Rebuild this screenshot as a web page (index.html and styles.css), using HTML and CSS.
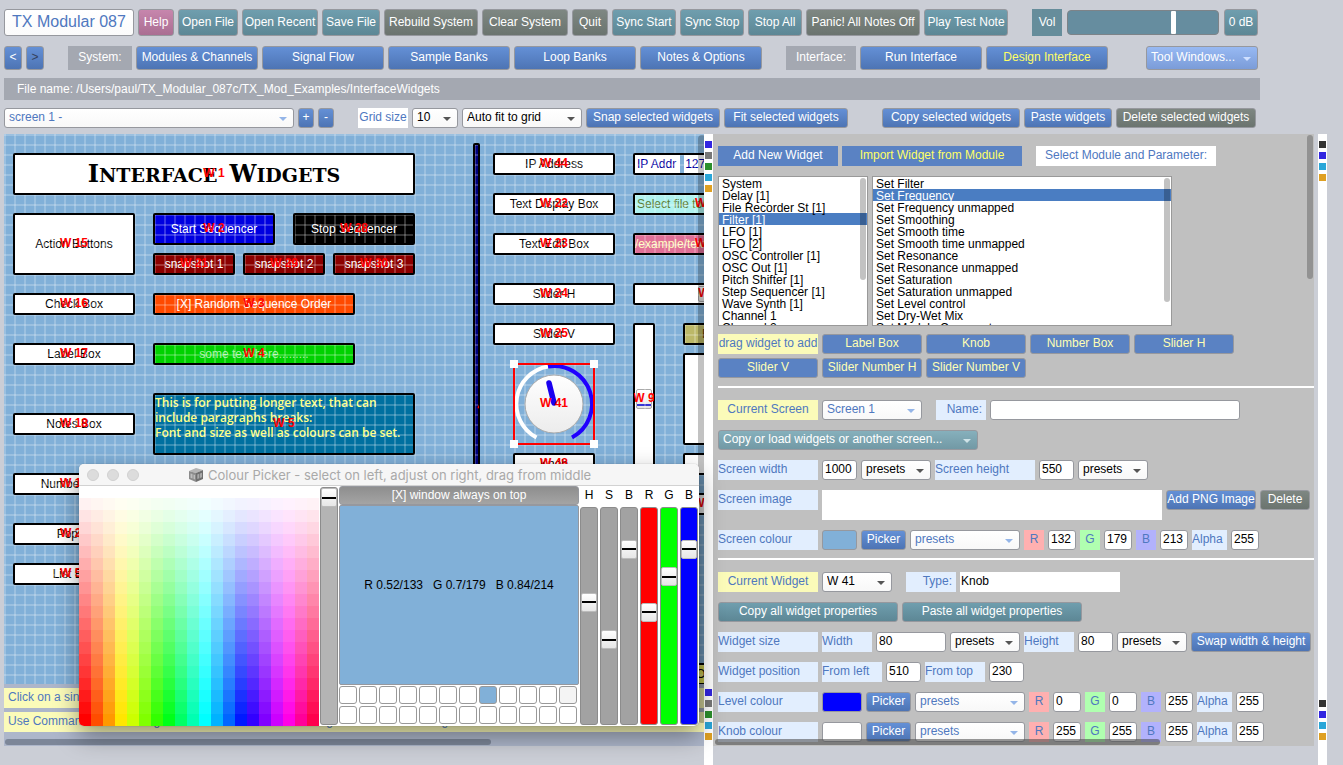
FILE: index.html
```html
<!DOCTYPE html>
<html lang="en">
<head>
<meta charset="utf-8">
<title>TX Modular 087</title>
<link rel="stylesheet" href="styles.css">
</head>
<body>
<header class="top">
  <div class="bar bar-main">
    <button class="btn brand w130">TX Modular 087</button>
    <button class="btn pink w36">Help</button>
    <button class="btn teal w60">Open File</button>
    <button class="btn teal w76">Open Recent</button>
    <button class="btn teal w58">Save File</button>
    <button class="btn grey w94">Rebuild System</button>
    <button class="btn grey w86">Clear System</button>
    <button class="btn grey w36">Quit</button>
    <button class="btn teal w64">Sync Start</button>
    <button class="btn teal w64">Sync Stop</button>
    <button class="btn teal w54">Stop All</button>
    <button class="btn grey w114">Panic! All Notes Off</button>
    <button class="btn teal w84">Play Test Note</button>
    <label class="tag teal-tag w30 push20" for="vol">Vol</label>
    <input class="volume" id="vol" type="range" min="0" max="100" value="71">
    <button class="btn teal w34">0 dB</button>
  </div>
  <nav class="bar bar-nav">
    <button class="btn blue w18" aria-label="Back">&lt;</button>
    <button class="btn blue dim w18" aria-label="Forward">&gt;</button>
    <span class="tag grey-tag w64 push20">System:</span>
    <button class="btn blue w122">Modules &amp; Channels</button>
    <button class="btn blue w122">Signal Flow</button>
    <button class="btn blue w122">Sample Banks</button>
    <button class="btn blue w122">Loop Banks</button>
    <button class="btn blue w122">Notes &amp; Options</button>
    <span class="tag grey-tag w70 push20">Interface:</span>
    <button class="btn blue w122">Run Interface</button>
    <button class="btn blue active w122">Design Interface</button>
    <select class="pop sky w112 push34" aria-label="Tool windows"><option>Tool Windows...</option></select>
  </nav>
  <div class="filename">File name: /Users/paul/TX_Modular_087c/TX_Mod_Examples/InterfaceWidgets</div>
  <div class="bar">
    <select class="pop soft w290" aria-label="Screen"><option>screen 1 -</option></select>
    <button class="btn blue w16" aria-label="Next screen">+</button>
    <button class="btn blue w16" aria-label="Previous screen">-</button>
    <label class="tag white-tag w50 push20" for="grid">Grid size</label>
    <select class="pop w46" id="grid"><option>10</option></select>
    <select class="pop w120" aria-label="Grid fitting"><option>Auto fit to grid</option></select>
    <button class="btn blue w134">Snap selected widgets</button>
    <button class="btn blue w124">Fit selected widgets</button>
    <button class="btn blue w138 push30">Copy selected widgets</button>
    <button class="btn blue w88">Paste widgets</button>
    <button class="btn grey w140">Delete selected widgets</button>
  </div>
</header>

<main class="work">
  <section class="design">
    <div class="canvas" id="canvas"></div>
    <p class="hint">Click on a single widget to select it, or drag it to move it around the screen.</p>
    <p class="hint">Use Command-click on widgets to select more than one widget at a time for editing.</p>
    <span class="thumb thumb-canvas-v"></span>
    <span class="thumb thumb-canvas-h"></span>
  </section>

  <div class="dock">
    <div class="marks"><i class="m-blue"></i><i class="m-grey"></i><i class="m-green"></i><i class="m-cyan"></i><i class="m-gold"></i></div>
    <div class="marks"><i class="m-blue"></i><i class="m-grey"></i><i class="m-green"></i><i class="m-cyan"></i><i class="m-gold"></i></div>
  </div>

  <section class="props">
    <div class="row">
      <button class="flat w120">Add New Widget</button>
      <button class="flat active w180">Import Widget from Module</button>
      <span class="tag white-tag w180 push10">Select Module and Parameter:</span>
    </div>
    <div class="row lists">
      <div class="listwrap w150">
        <select class="list" size="12" aria-label="Module">
          <option>System</option><option>Delay [1]</option><option>File Recorder St [1]</option><option selected>Filter [1]</option><option>LFO [1]</option><option>LFO [2]</option><option>OSC Controller [1]</option><option>OSC Out [1]</option><option>Pitch Shifter [1]</option><option>Step Sequencer [1]</option><option>Wave Synth [1]</option><option>Channel 1</option><option>Channel 2</option>
        </select>
        <span class="thumb thumb-list short"></span>
      </div>
      <div class="listwrap w300">
        <select class="list" size="12" aria-label="Parameter">
          <option>Set Filter</option><option selected>Set Frequency</option><option>Set Frequency unmapped</option><option>Set Smoothing</option><option>Set Smooth time</option><option>Set Smooth time unmapped</option><option>Set Resonance</option><option>Set Resonance unmapped</option><option>Set Saturation</option><option>Set Saturation unmapped</option><option>Set Level control</option><option>Set Dry-Wet Mix</option><option>Set Module Comments</option>
        </select>
        <span class="thumb thumb-list"></span>
      </div>
    </div>
    <div class="row tight">
      <span class="tag yellow-tag w100">drag widget to add</span>
      <button class="btn drag w100">Label Box</button>
      <button class="btn drag w100">Knob</button>
      <button class="btn drag w100">Number Box</button>
      <button class="btn drag w100">Slider H</button>
    </div>
    <div class="row">
      <button class="btn drag w100">Slider V</button>
      <button class="btn drag w100">Slider Number H</button>
      <button class="btn drag w100">Slider Number V</button>
    </div>
    <hr>
    <div class="row">
      <label class="tag yellow-tag w100" for="cur-screen">Current Screen</label>
      <select class="pop soft w100" id="cur-screen"><option>Screen 1</option></select>
      <label class="tag ice-tag right w50 push10" for="name">Name:</label>
      <input class="field w250" id="name" type="text">
    </div>
    <div class="row">
      <select class="pop tealpop w260" aria-label="Copy or load"><option>Copy or load widgets or another screen...</option></select>
    </div>
    <div class="row">
      <label class="tag ice-tag left w100" for="sw">Screen width</label>
      <input class="field w35" id="sw" type="text" value="1000">
      <select class="pop w70" aria-label="Width presets"><option>presets</option></select>
      <label class="tag ice-tag left w100" for="sh">Screen height</label>
      <input class="field w35" id="sh" type="text" value="550">
      <select class="pop w70" aria-label="Height presets"><option>presets</option></select>
    </div>
    <div class="row">
      <label class="tag ice-tag left w100" for="img">Screen image</label>
      <textarea class="image w340" id="img"></textarea>
      <button class="btn blue w90">Add PNG Image</button>
      <button class="btn grey w50">Delete</button>
    </div>
    <div class="row">
      <span class="tag ice-tag left w100">Screen colour</span>
      <span class="swatch sky-swatch w35"></span>
      <button class="btn blue w45">Picker</button>
      <select class="pop soft w110" aria-label="Screen colour presets"><option>presets</option></select>
      <label class="tag red-tag w20" for="sr">R</label><input class="field w28" id="sr" type="text" value="132">
      <label class="tag green-tag w20" for="sg">G</label><input class="field w28" id="sg" type="text" value="179">
      <label class="tag blue-tag w20" for="sb">B</label><input class="field w28" id="sb" type="text" value="213">
      <label class="tag ice-tag left w35" for="sa">Alpha</label><input class="field w28" id="sa" type="text" value="255">
    </div>
    <hr>
    <div class="row">
      <label class="tag yellow-tag w100" for="cur-widget">Current Widget</label>
      <select class="pop w70" id="cur-widget"><option>W 41</option></select>
      <label class="tag ice-tag right w50 push10" for="type">Type:</label>
      <input class="plain w160" id="type" type="text" value="Knob">
    </div>
    <div class="row">
      <button class="btn teal w180">Copy all widget properties</button>
      <button class="btn teal w180">Paste all widget properties</button>
    </div>
    <div class="row">
      <span class="tag ice-tag left w100">Widget size</span>
      <label class="tag ice-tag left w50" for="ww">Width</label>
      <input class="field w70" id="ww" type="text" value="80">
      <select class="pop w70" aria-label="Widget width presets"><option>presets</option></select>
      <label class="tag ice-tag left w50" for="wh">Height</label>
      <input class="field w35" id="wh" type="text" value="80">
      <select class="pop w70" aria-label="Widget height presets"><option>presets</option></select>
      <button class="btn blue w120">Swap width &amp; height</button>
    </div>
    <div class="row">
      <span class="tag ice-tag left w100">Widget position</span>
      <label class="tag ice-tag left w60" for="wl">From left</label>
      <input class="field w35" id="wl" type="text" value="510">
      <label class="tag ice-tag left w60" for="wt">From top</label>
      <input class="field w35" id="wt" type="text" value="230">
    </div>
    <div class="row">
      <span class="tag ice-tag left w100">Level colour</span>
      <span class="swatch blue-swatch w40"></span>
      <button class="btn blue w45">Picker</button>
      <select class="pop soft w110" aria-label="Level colour presets"><option>presets</option></select>
      <label class="tag red-tag w20" for="lr">R</label><input class="field w28" id="lr" type="text" value="0">
      <label class="tag green-tag w20" for="lg">G</label><input class="field w28" id="lg" type="text" value="0">
      <label class="tag blue-tag w20" for="lb">B</label><input class="field w28" id="lb" type="text" value="255">
      <label class="tag ice-tag left w35" for="la">Alpha</label><input class="field w28" id="la" type="text" value="255">
    </div>
    <div class="row last">
      <span class="tag ice-tag left w100">Knob colour</span>
      <span class="swatch white-swatch w40"></span>
      <button class="btn blue w45">Picker</button>
      <select class="pop soft w110" aria-label="Knob colour presets"><option>presets</option></select>
      <label class="tag red-tag w20" for="kr">R</label><input class="field w28" id="kr" type="text" value="255">
      <label class="tag green-tag w20" for="kg">G</label><input class="field w28" id="kg" type="text" value="255">
      <label class="tag blue-tag w20" for="kb">B</label><input class="field w28" id="kb" type="text" value="255">
      <label class="tag ice-tag left w35" for="ka">Alpha</label><input class="field w28" id="ka" type="text" value="255">
    </div>
    <span class="thumb thumb-props-v"></span>
    <span class="thumb thumb-props-h"></span>
  </section>

  <div class="dock dock-right">
    <div class="marks"><i class="m-black"></i><i class="m-blue"></i><i class="m-cyan"></i><i class="m-gold"></i></div>
    <div class="marks"><i class="m-black"></i><i class="m-blue"></i><i class="m-cyan"></i><i class="m-gold"></i></div>
  </div>
</main>

<aside class="picker">
  <div class="titlebar">
    <span class="light"></span><span class="light"></span><span class="light"></span>
    <h2 class="picker-title">
      <svg width="16" height="16" viewBox="0 0 16 16" aria-hidden="true">
        <path d="M1 4 8 1l7 2-7 3z" fill="#b5b5b5"/>
        <path d="M1 4l7 2v9l-7-3z" fill="#8b8b8b"/>
        <path d="M8 6l7-3v9l-7 3z" fill="#6f6f6f"/>
        <path d="M2.500 6.500l2 .6v4.400l-2-.7zM5.500 7.500l1.500.4v4.500l-1.500-.6z" fill="#bdbdbd"/>
        <path d="M9.300 7.600l2-.8v4.500l-2 .8zM12 6.500l2-.8v4.600l-2 .8z" fill="#a9a9a9"/>
      </svg>
      Colour Picker - select on left, adjust on right, drag from middle
    </h2>
  </div>
  <div class="picker-body">
    <div class="spectrum" id="spectrum"></div>
    <input class="vslider fade" type="range" min="0" max="100" value="100" aria-label="Brightness">
    <div class="mix">
      <button class="btn always">[X] window always on top</button>
      <output class="readout">R 0.52/133 &nbsp; G 0.7/179 &nbsp; B 0.84/214</output>
      <div class="wells" id="wells"></div>
    </div>
    <div class="channel"><label for="ch-h">H</label><input class="vslider" id="ch-h" type="range" max="1000" value="570"></div>
    <div class="channel"><label for="ch-s">S</label><input class="vslider" id="ch-s" type="range" max="1000" value="379"></div>
    <div class="channel"><label for="ch-v">B</label><input class="vslider" id="ch-v" type="range" max="1000" value="838"></div>
    <div class="channel"><label for="ch-r">R</label><input class="vslider red" id="ch-r" type="range" max="1000" value="520"></div>
    <div class="channel"><label for="ch-g">G</label><input class="vslider green" id="ch-g" type="range" max="1000" value="700"></div>
    <div class="channel"><label for="ch-b">B</label><input class="vslider azure" id="ch-b" type="range" max="1000" value="838"></div>
  </div>
</aside>
<script src="script.js"></script>
</body>
</html>
```
FILE: styles.css
```css
* { box-sizing: border-box; }

body {
  margin: 0;
  min-height: 100vh;
  display: flex;
  flex-direction: column;
  background: #cbced6;
  color: #000;
  font: 12px/16px "Liberation Sans", Arial, sans-serif;
  overflow: hidden;
}

button, input, select, textarea { font: inherit; margin: 0; }

/* top bars */
.top { padding: 9px 4px 0; display: flex; flex-direction: column; }
.bar { display: flex; gap: 4px; height: 20px; }
.bar-main { height: 27px; margin-bottom: 10px; }
.bar-nav { height: 24px; }
.filename {
  width: 1256px;
  max-width: 100%;
  height: 22px;
  margin: 8px 0;
  padding: 3px 13px;
  background: #a4a8b1;
  color: #fff;
}

.btn {
  flex: none;
  padding: 0 0 2px;
  border: 1px solid #96989e;
  border-radius: 3px;
  color: #fff;
  white-space: nowrap;
  text-align: center;
  line-height: 14px;
  overflow: hidden;
}
.blue { background: linear-gradient(#6490d6, #4d74b4); }
.teal { background: linear-gradient(#6f9eae, #5d8795); }
.grey { background: linear-gradient(#7e8782, #6b746f); }
.pink { background: linear-gradient(#c786ad, #aa6e92); }
.brand { background: linear-gradient(#fff, #fbfbfb); color: #4f78bf; font-size: 16px; }
.drag { background: #5a82c3; color: #ffffb4; }
.active { color: #ffff66; }
.dim { color: #34415c; }

.tag {
  flex: none;
  height: 100%;
  display: flex;
  align-items: center;
  justify-content: center;
  padding-bottom: 2px;
  color: #4f78bf;
  white-space: nowrap;
}
.left { justify-content: flex-start; }
.right { justify-content: flex-end; padding-right: 4px; }
.teal-tag { background: #668d9b; color: #fff; }
.grey-tag { background: #a4a8b1; color: #fff; }
.white-tag { background: #fff; }
.yellow-tag { background: #fbfbb9; }
.ice-tag { background: #e2eefe; }
.red-tag { background: #ffb0b0; }
.green-tag { background: #b0ffb0; }
.blue-tag { background: #b2b2fc; }

.pop {
  flex: none;
  appearance: none;
  padding: 0 16px 2px 4px;
  border: 1px solid #96989e;
  border-radius: 3px;
  color: #000;
  background: url("data:image/svg+xml,%3Csvg xmlns='http://www.w3.org/2000/svg' width='8' height='5'%3E%3Cpath d='M0 0h8L4 4z' fill='%23555'/%3E%3C/svg%3E") no-repeat right 6px top 60%, linear-gradient(#fff, #f8f8f8);
}
.soft {
  color: #4f78bf;
  background: url("data:image/svg+xml,%3Csvg xmlns='http://www.w3.org/2000/svg' width='8' height='5'%3E%3Cpath d='M0 0h8L4 4z' fill='%2394b5e8'/%3E%3C/svg%3E") no-repeat right 6px top 60%, linear-gradient(#fff, #f8f8f8);
}
.sky {
  color: #fff;
  background: url("data:image/svg+xml,%3Csvg xmlns='http://www.w3.org/2000/svg' width='8' height='5'%3E%3Cpath d='M0 0h8L4 4z' fill='%23cfe0ff'/%3E%3C/svg%3E") no-repeat right 6px top 60%, linear-gradient(#97b9f3, #7b9cd8);
}
.tealpop {
  color: #fff;
  background: url("data:image/svg+xml,%3Csvg xmlns='http://www.w3.org/2000/svg' width='8' height='5'%3E%3Cpath d='M0 0h8L4 4z' fill='%23cfe3e8'/%3E%3C/svg%3E") no-repeat right 6px top 60%, linear-gradient(#86b0bc, #7299a5);
}

.volume {
  appearance: none;
  flex: none;
  width: 152px;
  height: 25px;
  margin: 1px 1px;
  border: 1px solid #7d8388;
  border-radius: 4px;
  background: #668d9f;
}
.volume::-webkit-slider-thumb {
  appearance: none;
  width: 5px;
  height: 23px;
  border-radius: 1px;
  background: #fff;
}

/* work area */
.work {
  flex: 1;
  display: grid;
  grid-template-columns: minmax(0, 700fr) 9px minmax(0, 605fr) 9px;
  align-items: start;
  margin-top: 6px;
  padding: 0 16px 0 4px;
}
.design {
  position: relative;
  overflow: hidden;
  padding-bottom: 14px;
  background: #adb6ca;
}
.canvas {
  --lines:
    repeating-linear-gradient(90deg, rgba(255,255,255,.21) 0 2px, transparent 2px 10px),
    repeating-linear-gradient(rgba(255,255,255,.21) 0 2px, transparent 2px 10px);
  position: relative;
  height: 550px;
  margin-bottom: 4px;
  background: var(--lines), #81b0d8;
  overflow: hidden;
}
.widget {
  position: absolute;
  display: flex;
  align-items: center;
  justify-content: center;
  border: 2px solid #000;
  border-radius: 2px;
  background: #fff;
  white-space: nowrap;
  overflow: hidden;
}
/* the grid shows through widgets, lined up with the canvas grid */
.widget::after {
  content: "";
  position: absolute;
  inset: -1px 0 0 -1px;
  background: var(--lines);
}
.widget.start { background: #0000e0; color: #fff; }
.widget.stop { background: #000; color: #fff; }
.widget.snap { background: #8c0000; color: #fff; }
.widget.check { background: #ff4a00; color: #fff; }
.widget.label { background: #00d200; color: #a9f0a9; }
.widget.rule { background: #00007d; }
.widget.notes {
  display: block;
  background: #0070a0;
  color: #ffff80;
  font: 600 12px/15px "Open Sans", "Noto Sans", sans-serif;
  white-space: pre-line;
}
.widget.address { justify-content: flex-start; color: #0000a0; padding-left: 2px; }
.widget.address .ip { margin-left: 4px; border-left: 4px solid #81b0d8; padding-left: 1px; line-height: 18px; }
.widget.display { justify-content: flex-start; padding-left: 2px; background: #b0f2ef; color: #5c7c34; }
.widget.edit { justify-content: flex-start; background: #e07097; color: #ffffc0; }
.widget.olive { justify-content: flex-start; padding-left: 17px; background: #bcb868; color: #5a3a00; }
.widget.lemon { background: #f0ee60; }
.widget.title { font-family: "DejaVu Serif", serif; font-weight: bold; font-size: 19px; gap: 12px; text-transform: uppercase; }
.widget.title::after { content: none; }
.word { display: block; }
.word::first-letter { font-size: 24px; }
.wid {
  position: absolute;
  display: flex;
  align-items: center;
  justify-content: center;
  padding-bottom: 2px;
  color: #f00;
  font-weight: bold;
  white-space: nowrap;
  overflow: hidden;
}
.cap-h, .cap-v {
  position: absolute;
  border: 1px solid #aaa;
  border-radius: 2px;
  background: linear-gradient(#fff, #e4e4e4);
}
.cap-h { left: 63px; top: 1px; width: 18px; height: 16px; }
.cap-v { left: 1px; top: 64px; width: 16px; height: 20px; }
.cap-v::after { content: ""; display: block; margin: 14px 0 0; height: 2px; background: #0000c8; }
.knob { position: absolute; overflow: visible; }

.hint {
  height: 20px;
  margin: 0 0 4px;
  padding: 1px 4px;
  background: #fbfbb9;
  color: #4f78bf;
  white-space: nowrap;
  overflow: hidden;
}
.hint + .hint { margin-bottom: 0; }

.thumb { position: absolute; border-radius: 4px; background: rgba(0,0,0,.24); }
.thumb-canvas-v { right: -2px; top: 1px; width: 8px; height: 588px; }
.thumb-canvas-h { left: 1px; bottom: 1px; width: 486px; height: 6px; background: #7c8698; }
.thumb-props-v { right: 1px; top: 1px; width: 6px; height: 144px; }
.thumb-props-h { left: 2px; bottom: 1px; width: 445px; height: 6px; background: rgba(70,70,70,.55); }
.thumb-list { right: 2px; top: 2px; width: 6px; height: 124px; }
.thumb-list.short { height: 102px; }

.dock {
  align-self: stretch;
  display: flex;
  flex-direction: column;
  justify-content: space-between;
  padding: 7px 1px 25px;
  background: #fff;
}
.marks { display: flex; flex-direction: column; gap: 4px; }
.marks i { width: 7px; height: 7px; }
.m-blue { background: #3226e0; }
.m-grey { background: #777; }
.m-green { background: #2b8f2b; }
.m-cyan { background: #2aa6d8; }
.m-gold { background: #dfa022; }
.m-black { background: #333; }

/* property panel */
.props {
  position: relative;
  margin-right: 4px;
  padding: 12px 0 4px 5px;
  background: #c0c0c0;
  overflow: hidden;
}
.row { display: flex; gap: 4px; height: 20px; margin-bottom: 10px; }
.row.lists { height: 150px; margin-bottom: 8px; }
.row.tight { margin-bottom: 4px; }
.row.last { margin-bottom: 0; }
.row:has(+ hr) { margin-bottom: 8px; }
.row:has(.image) { height: 30px; margin-bottom: 10px; }
.row:has(.image) > .tag, .row:has(.image) > .btn { height: 20px; }
hr { height: 2px; margin: 0 0 12px; border: 0; background: #fff; }

.flat { flex: none; padding: 0 0 2px; border: 0; background: #5a82c3; color: #fff; white-space: nowrap; }
.flat.active { color: #ffff66; }

.listwrap { position: relative; flex: none; }
.list {
  width: 100%;
  height: 100%;
  padding: 0;
  border: 1px solid #999;
  border-radius: 0;
  background: #fff;
  color: #000;
  overflow: hidden;
  scrollbar-width: none;
  outline: none;
}
.list option { padding: 0 3px; min-height: 12px; height: 12px; line-height: 10px; overflow: visible; }
.list option:checked { background: #4a7dc2 linear-gradient(#4a7dc2, #4a7dc2); color: #fff; }

.field {
  flex: none;
  padding: 0 2px 2px;
  border: 1px solid #96989e;
  border-radius: 3px;
  background: #fff;
  color: #000;
}
.plain { flex: none; border: 0; padding: 0 1px 2px; background: #fff; color: #000; }
.image { flex: none; height: 30px; border: 0; resize: none; background: #fff; }
.swatch { flex: none; border: 1px solid #96989e; border-radius: 3px; }
.sky-swatch { background: #81b0d8; }
.blue-swatch { background: #00f; }
.white-swatch { background: #fff; }

/* floating colour picker window */
.picker {
  position: absolute;
  left: 79px;
  top: 464px;
  width: 620px;
  height: 262px;
  background: #fff;
  border-radius: 5px;
  overflow: hidden;
  box-shadow: 0 0 1px rgba(0,0,0,.4), 0 10px 25px rgba(0,0,0,.4);
}
.titlebar {
  height: 22px;
  display: flex;
  align-items: center;
  gap: 8px;
  padding: 0 8px;
  background: #f6f6f6;
  border-bottom: 1px solid #d2d2d2;
}
.light { width: 12px; height: 12px; border-radius: 50%; background: #dcdcdc; border: 1px solid #d0d0d0; }
.picker-title {
  flex: 1;
  display: flex;
  align-items: center;
  gap: 4px;
  margin: 0 0 0 41px;
  color: #a9a9a9;
  font: 13px/20px Inter, "Liberation Sans", sans-serif;
  white-space: nowrap;
}
.picker-body { display: flex; height: 240px; }
.spectrum { width: 240px; display: grid; grid-template-columns: repeat(20, 1fr); grid-template-rows: repeat(20, 1fr); }
.vslider {
  appearance: none;
  writing-mode: vertical-lr;
  direction: rtl;
  width: 18px;
  height: 218px;
  margin: 0 1px;
  border: 1px solid #8c8c8c;
  border-radius: 3px;
  background: #a2a2a2;
}
.vslider::-webkit-slider-thumb {
  appearance: none;
  width: 16px;
  height: 19px;
  border: 1px solid #bbb;
  border-radius: 2px;
  background: linear-gradient(#000, #000) no-repeat center / 14px 2px, linear-gradient(#fff, #e6e6e6);
}
.vslider.fade { height: 238px; margin: 1px; background: #b4b4b4; }
.vslider.red { background: #f00; }
.vslider.green { background: #0f0; }
.vslider.azure { background: #00f; }
.mix { width: 240px; display: flex; flex-direction: column; }
.always { height: 19px; background: linear-gradient(#8e8e8e, #a4a4a4); }
.readout {
  height: 180px;
  display: flex;
  align-items: center;
  justify-content: center;
  border: 1px solid #96989e;
  border-radius: 2px;
  background: #81b0d8;
  padding-bottom: 20px;
}
.wells { flex: 1; display: grid; grid-template-columns: repeat(12, 18px); grid-auto-rows: 18px; gap: 2px; padding-top: 1px; }
.well { padding: 0; border: 1px solid #999; border-radius: 3px; background: #fff; }
.well.used { background: #81b0d8; }
.well.pale { background: #f4f4f4; }
.channel { width: 20px; display: flex; flex-direction: column; text-align: center; }
.channel label { height: 21px; line-height: 19px; }

/* spacing and width scale */
.push10 { margin-left: 10px; }
.push20 { margin-left: 20px; }
.push30 { margin-left: 30px; }
.push34 { margin-left: 34px; }
.w16 { width: 16px; }
.w18 { width: 18px; }
.w20 { width: 20px; }
.w28 { width: 28px; }
.w30 { width: 30px; }
.w34 { width: 34px; }
.w35 { width: 35px; }
.w36 { width: 36px; }
.w40 { width: 40px; }
.w45 { width: 45px; }
.w46 { width: 46px; }
.w50 { width: 50px; }
.w54 { width: 54px; }
.w58 { width: 58px; }
.w60 { width: 60px; }
.w64 { width: 64px; }
.w70 { width: 70px; }
.w76 { width: 76px; }
.w84 { width: 84px; }
.w86 { width: 86px; }
.w88 { width: 88px; }
.w90 { width: 90px; }
.w94 { width: 94px; }
.w100 { width: 100px; }
.w110 { width: 110px; }
.w112 { width: 112px; }
.w114 { width: 114px; }
.w120 { width: 120px; }
.w122 { width: 122px; }
.w124 { width: 124px; }
.w130 { width: 130px; }
.w134 { width: 134px; }
.w138 { width: 138px; }
.w140 { width: 140px; }
.w150 { width: 150px; }
.w160 { width: 160px; }
.w180 { width: 180px; }
.w250 { width: 250px; }
.w260 { width: 260px; }
.w290 { width: 290px; }
.w300 { width: 300px; }
.w340 { width: 340px; }
```
FILE: script.js
```js
// Widgets on the design canvas: x, y, width, height, id, content, style
const widgets = [
  [10, 20, 400, 40, "W 1", '<span class="word">Interface</span><span class="word">Widgets</span>', "title"],
  [10, 80, 120, 60, "W 15", "Action Buttons", ""],
  [150, 80, 120, 30, "W 2", "Start Sequencer", "start"],
  [290, 80, 120, 30, "W 28", "Stop Sequencer", "stop"],
  [150, 120, 80, 20, "W 21", "snapshot 1", "snap"],
  [240, 120, 80, 20, "W 29", "snapshot 2", "snap"],
  [330, 120, 80, 20, "W 30", "snapshot 3", "snap"],
  [10, 160, 120, 20, "W 16", "Check Box", ""],
  [150, 160, 200, 20, "W 3", "[X] Random Sequence Order", "check"],
  [10, 210, 120, 20, "W 17", "Label Box", ""],
  [150, 210, 200, 20, "W 4", "some text here.........", "label"],
  [10, 280, 120, 20, "W 18", "Notes Box", ""],
  [150, 260, 260, 60, "W 5", "This is for putting longer text, that can\ninclude paragraphs breaks:\nFont and size as well as colours can be set.", "notes"],
  [10, 340, 120, 20, "W 19", "Number Box", ""],
  [10, 390, 120, 20, "W 20", "Popup", ""],
  [10, 430, 120, 20, "W 51", "List Box", ""],
  [470, 10, 5, 525, "W 40", "", "rule"],
  [490, 20, 120, 20, "W 44", "IP Address", ""],
  [490, 60, 120, 20, "W 22", "Text Display Box", ""],
  [490, 100, 120, 20, "W 23", "Text Edit Box", ""],
  [490, 150, 120, 20, "W 24", "Slider H", ""],
  [490, 190, 120, 20, "W 25", "Slider V", ""],
  [630, 20, 200, 20, "", 'IP Addr<span class="ip">127.0.0.1</span>', "address"],
  [630, 60, 150, 20, "W 42", "Select file to open", "display"],
  [630, 100, 150, 20, "W 43", "/example/text", "edit"],
  [630, 150, 150, 20, "W 8", '<span class="cap-h"></span>', ""],
  [630, 190, 20, 150, "W 9", '<span class="cap-v"></span>', ""],
  [680, 190, 120, 20, "", "Row", "olive"],
  [680, 220, 120, 90, "", "", ""],
  [510, 320, 80, 20, "W 48", "Knob", ""],
  [680, 320, 120, 20, "", "", ""],
  [680, 360, 40, 20, "W 7", "", ""],
  [680, 530, 40, 20, "", "On", "lemon"]
];

const knob = `<svg class="knob" width="80" height="80" viewBox="0 0 80 80">
  <defs><linearGradient id="face" x1="0" y1="0" x2="0" y2="1"><stop offset="0" stop-color="#fff"/><stop offset="1" stop-color="#ececec"/></linearGradient></defs>
  <path d="M22.500 73.500A38 38 0 0 1 34 2.500" fill="none" stroke="#fff" stroke-width="4"/>
  <path d="M34 2.500A38 38 0 0 1 58 73.500" fill="none" stroke="#2000ff" stroke-width="4"/>
  <circle cx="40" cy="40" r="29" fill="url(#face)" stroke="#aaa"/>
  <path d="M35 19l5 20" stroke="#1a00f0" stroke-width="5.500" stroke-linecap="round"/>
  <path d="M0 0h80v80H0z" fill="none" stroke="#f00" stroke-width="2"/>
  <path d="M-4-4h8v8h-8zM76-4h8v8h-8zM-4 76h8v8h-8zM76 76h8v8h-8z" fill="#fff"/>
</svg>`;

const canvas = document.getElementById("canvas");

function place(el, x, y, w, h) {
  el.style.left = x + "px";
  el.style.top = y + "px";
  el.style.width = w + "px";
  el.style.height = h + "px";
  canvas.appendChild(el);
}

for (const [x, y, w, h, , content, style] of widgets) {
  const el = document.createElement("div");
  el.className = "widget " + style;
  el.innerHTML = content;
  place(el, x - 1, y - 1, w + 2, h + 2);
}

const holder = document.createElement("div");
holder.className = "knob";
holder.innerHTML = knob;
place(holder, 510, 230, 80, 80);

for (const [x, y, w, h, id] of [...widgets, [510, 230, 80, 80, "W 41"]]) {
  if (!id) continue;
  const el = document.createElement("span");
  el.className = "wid";
  el.textContent = id;
  place(el, x, y, w, h);
}

// 20 x 20 spectrum: hue across, saturation down
const spectrum = document.getElementById("spectrum");
for (let row = 0; row < 20; row++) {
  for (let col = 0; col < 20; col++) {
    const cell = document.createElement("i");
    const s = row / 19;
    cell.style.background = `hsl(${col * 18} 100% ${100 - s * 50}%)`;
    spectrum.appendChild(cell);
  }
}

const wells = document.getElementById("wells");
for (let i = 0; i < 24; i++) {
  const well = document.createElement("button");
  well.className = "well" + (i === 7 ? " used" : i === 11 ? " pale" : "");
  well.setAttribute("aria-label", "Colour well " + (i + 1));
  wells.appendChild(well);
}
```
